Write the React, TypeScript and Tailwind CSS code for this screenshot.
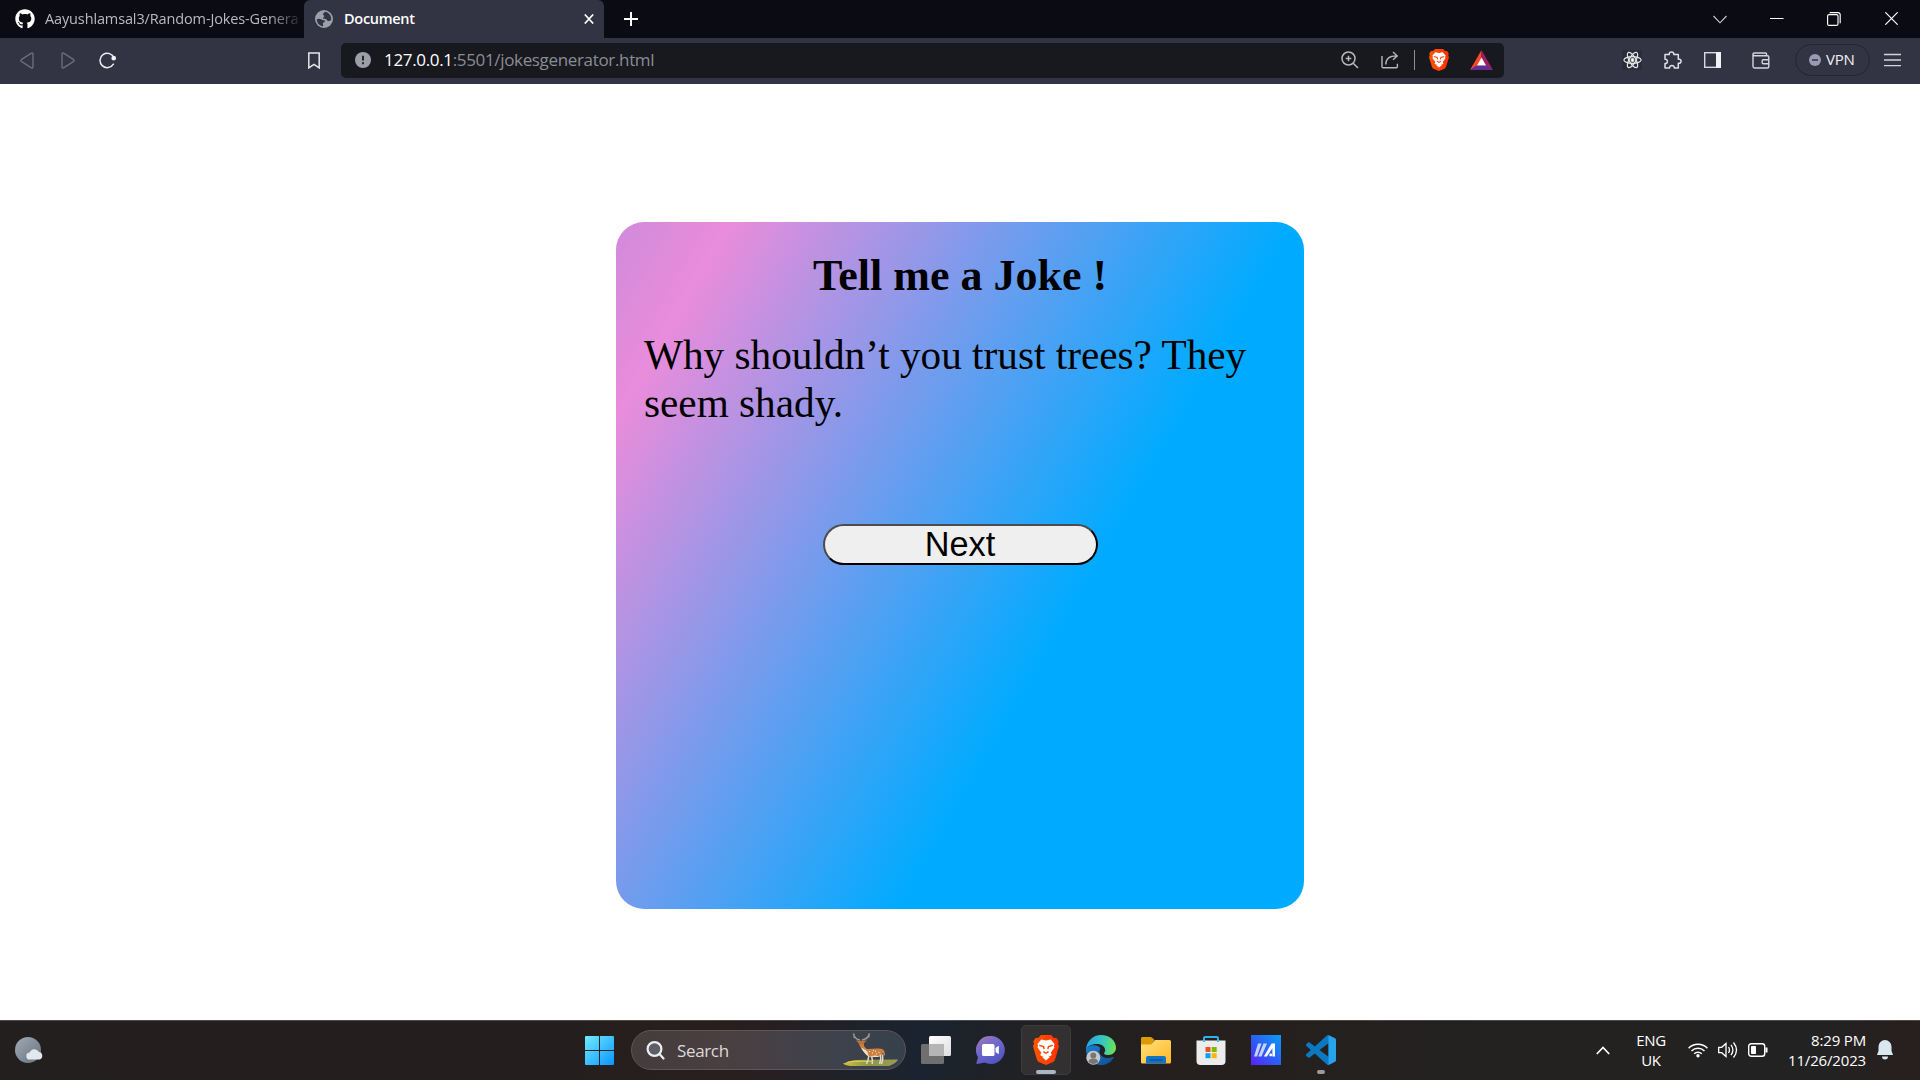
import React from "react";
import { FaGithub } from "react-icons/fa";

const ui = "font-['Open_Sans','Noto_Sans',sans-serif]";

function Globe() {
  return (
    <svg className="ml-[11px] shrink-0" width="18" height="18" viewBox="0 0 18 18">
      <circle cx="9" cy="9" r="9" fill="#9b9fa8" />
      <path d="M1.800 9.200c2-.9 3.400-.6 4.600.2 1.400 1 3.600.2 3.700 1.700.1 1.300-2 1-2.200 2.300-.1 1 .6 1.800.1 2.800C4.400 15.700 1.800 12.800 1.800 9.200zM9.800 1.800C9.600 3 8 2.900 8 4.200c0 1.200 1.500.9 1.400 2-.1.800-1.300.9-1.200 1.800.2 1.300 2 .5 3 1.300.9.7 1.400 2 2.700 1.800 1-.1 1.300-1 2.300-1.200C16.600 5.800 13.800 2.200 9.800 1.800z" fill="#323443" />
    </svg>
  );
}

function TabBar() {
  return (
    <div className="flex h-[38px] bg-[#0b0b14] text-white">
      <div className="flex w-[304px] items-center pl-[15px]">
        <FaGithub size={20} className="shrink-0" />
        <span className="ml-[10px] whitespace-nowrap text-[14.5px] leading-[20px] tracking-[-0.13px] text-[#b9babd] [mask-image:linear-gradient(to_right,black_88%,transparent_102%)]">
          Aayushlamsal3/Random-Jokes-Genera
        </span>
      </div>
      <div className="flex w-[300px] items-center rounded-t-[6px] bg-[#323443]">
        <Globe />
        <span className="ml-[11px] text-[14.5px] leading-[20px] font-semibold tracking-[-0.3px]">Document</span>
        <svg className="mr-[10px] ml-auto" width="10" height="10" viewBox="0 0 10 10" stroke="#fff" strokeWidth="1.700">
          <path d="M.8.5l8.400 9M9.200.5l-8.400 9" />
        </svg>
      </div>
      <svg className="mt-[12px] ml-[20px]" width="14" height="14" viewBox="0 0 14 14" stroke="#fff" strokeWidth="2">
        <path d="M7 0v14M0 7h14" />
      </svg>
      <div className="mr-[22px] ml-auto flex items-center pb-[1px]">
        <svg width="14" height="14" viewBox="0 0 14 14" fill="none" stroke="#cfcfd4" strokeWidth="1.100">
          <path d="M.5 4l6.500 6.800L13.500 4" />
        </svg>
        <svg className="ml-[43px]" width="14" height="14" viewBox="0 0 14 14" stroke="#fff">
          <path d="M0 6.500h13.500" />
        </svg>
        <svg className="ml-[43px]" width="14" height="14" viewBox="0 0 14 14" fill="none" stroke="#fff" strokeWidth="1.150">
          <rect x=".6" y="2.600" width="10.400" height="10.800" rx="1.500" />
          <path d="M2.600.6H11a2.200 2.200 0 0 1 2.200 2.200v8.500" />
        </svg>
        <svg className="ml-[44px]" width="13" height="13" viewBox="0 0 13 13" stroke="#fff" strokeWidth="1.200">
          <path d="M.3.3l12.400 12.400M12.700.3L.3 12.700" />
        </svg>
      </div>
    </div>
  );
}

function Toolbar() {
  return (
    <div className="flex h-[46px] items-center bg-[#323443] pr-[19px] pb-[2px]">
      <svg className="ml-[20px]" width="14" height="17" viewBox="0 0 14 17" fill="none" stroke="#6b6d78" strokeWidth="1.400" strokeLinejoin="round">
        <path d="M11.400 1.200Q13 .6 13 2.300v12.400q0 1.700-1.600 1.100L1.300 9.300q-1-.8 0-1.600z" />
      </svg>
      <svg className="ml-[27px]" width="14" height="17" viewBox="0 0 14 17" fill="none" stroke="#6b6d78" strokeWidth="1.400" strokeLinejoin="round">
        <path d="M2.600 1.200Q1 .6 1 2.300v12.400q0 1.700 1.600 1.100l10.100-6.500q1-.8 0-1.600z" />
      </svg>
      <svg className="ml-[24px]" width="18" height="18" viewBox="0 0 18 18" fill="none" stroke="#ededf0" strokeWidth="1.500" strokeLinecap="round">
        <path d="M15 7A7.200 7.200 0 1 0 14.400 13.200" />
        <circle cx="14.700" cy="7.200" r="1.600" fill="#fff" />
      </svg>
      <svg className="ml-[191px]" width="12" height="17" viewBox="0 0 12 17" fill="none" stroke="#e6e6ea" strokeWidth="1.500">
        <path d="M.8.9h10.400v15L6 12.300.8 15.900z" />
      </svg>
      <div className="ml-[21px] flex h-[35px] w-[1163px] items-center rounded-[5px] bg-[#17191f] pl-[14px]">
        <svg width="16" height="16" viewBox="0 0 16 16">
          <circle cx="8" cy="8" r="8" fill="#9c9fa9" />
          <path d="M8 3.800v4.800M8 10.300v2" stroke="#17191f" strokeWidth="1.800" />
        </svg>
        <span className="mb-[1px] ml-[13px] text-[17px] leading-[22px] tracking-[-0.34px] whitespace-nowrap text-[#8b8d93]">
          <span className="text-white">127.0.0.1</span>:5501/jokesgenerator.html
        </span>
        <div className="mr-[11px] ml-auto flex items-center">
          <svg width="18" height="18" viewBox="0 0 18 18" fill="none" stroke="#b7b8bc" strokeWidth="1.500">
            <circle cx="7.500" cy="7.500" r="6.500" />
            <path d="M12.200 12.200l4.800 4.800M7.500 4.700v5.600M4.700 7.500h5.600" />
          </svg>
          <svg className="ml-[22px]" width="18" height="18" viewBox="0 0 18 18" fill="none" stroke="#b7b8bc" strokeWidth="1.400">
            <path d="M1 5v10.500q0 1.200 1.200 1.200h13q1.200 0 1.200-1.200v-2.700M4.800 13.500c0-5 2.700-8.600 10.600-8.600M12 1l4.200 3.900L12 8.700" />
          </svg>
          <div className="ml-[15px] h-[20px] w-[1px] bg-[#8d8e93]" />
          <div className="ml-[14px]"><BraveLogo width={20} height={22} /></div>
          <svg className="ml-[21px]" width="23" height="20" viewBox="0 0 23 20">
            <path d="M11.500 0L0 20l11.500-6.500z" fill="#ff4724" />
            <path d="M11.500 0L23 20l-11.500-6.500z" fill="#9e1f63" />
            <path d="M0 20h23l-6-4.500H6z" fill="#662d91" />
            <path d="M11.500 7.500L16 15.500H7z" fill="#fff" />
          </svg>
        </div>
      </div>
      <div className="ml-auto flex items-center">
        <div className="flex h-[20px] w-[20px] items-center justify-center bg-[#2a2c38]">
          <svg width="19" height="18" viewBox="0 0 19 18" fill="none" stroke="#e6e6ea" strokeWidth="1.200">
            <ellipse cx="9.500" cy="9" rx="8.600" ry="3.300" />
            <ellipse cx="9.500" cy="9" rx="8.600" ry="3.300" transform="rotate(60 9.500 9)" />
            <ellipse cx="9.500" cy="9" rx="8.600" ry="3.300" transform="rotate(120 9.500 9)" />
            <circle cx="9.500" cy="9" r="1.300" fill="#fff" />
          </svg>
        </div>
        <svg className="ml-[22px]" width="18" height="18" viewBox="0 0 18 18" fill="none" stroke="#e0e0e5" strokeWidth="1.500" strokeLinejoin="round">
          <path d="M1 3.600h4.300C4.900 1.800 6.200.9 7.500.9s2.700 1 2.300 2.700h4.500v4.600c1.700-.4 2.800.7 2.800 2s-1.100 2.400-2.800 2v4.900h-4c.2-1.600-.8-2.600-2.300-2.600s-2.600 1-2.400 2.600H1v-4.500c1.500.1 2.400-.8 2.400-2.100S2.500 8.100 1 8.200z" />
        </svg>
        <svg className="ml-[22px]" width="17" height="16" viewBox="0 0 17 16">
          <rect x=".7" y=".7" width="15.600" height="14.600" fill="none" stroke="#d8d8dd" strokeWidth="1.400" />
          <path d="M12 0h5v16h-5z" fill="#f2f2f4" />
        </svg>
        <svg className="ml-[31px]" width="18" height="17" viewBox="0 0 18 17" fill="none" stroke="#d5d5da" strokeWidth="1.400">
          <path d="M14.500 3.800V2q0-1-1-1H2.300Q1 1 1 2.300v12q0 1.700 1.600 1.700h12.800q1.400 0 1.400-1.500V5.300q0-1.500-1.400-1.500H2.600Q1 3.800 1 2.300M16.800 7.700h-5.600q-1 0-1 1v2q0 1 1 1h5.600" />
        </svg>
        <div className="ml-[25px] flex h-[32px] w-[75px] items-center rounded-full border border-[#232531] pl-[13px]">
          <svg width="12" height="12" viewBox="0 0 12 12">
            <circle cx="6" cy="6" r="6" fill="#9a9bb2" />
            <path d="M3 6h6" stroke="#323443" strokeWidth="1.500" />
          </svg>
          <span className="mb-[2px] ml-[5px] text-[15px] leading-[20px] tracking-[-0.2px] text-[#f0f0f3]">VPN</span>
        </div>
        <svg className="ml-[14px]" width="17" height="14" viewBox="0 0 17 14" stroke="#d3d4da" strokeWidth="1.400">
          <path d="M0 1.500h17M0 7h17M0 12.600h17" />
        </svg>
      </div>
    </div>
  );
}

function BraveLogo({ width, height }: { width: number; height: number }) {
  return (
    <svg width={width} height={height} viewBox="0 0 20 24" preserveAspectRatio="none">
      <defs>
        <linearGradient id="lion" x1="0" x2="1">
          <stop offset="0" stopColor="#ff5500" />
          <stop offset="1" stopColor="#ff3000" />
        </linearGradient>
      </defs>
      <path d="M6 0h8l2 2.300 2-.2 1.800 3-.6 1.900.8 2-3 10.500c-.3 1-1 1.700-1.900 2.300L10 24l-5.100-2.200c-.9-.6-1.600-1.300-1.900-2.300L0 9l.8-2-.6-1.900 1.800-3 2 .2z" fill="url(#lion)" />
      <path d="M10 4.400l3.600-.8 3 3.600-.5 1.500.4 1.300-2.900 4.100.9 1.800-1.700 1.200-1.400-.8 1.400 1.400L10 20.300l-2.800-2.600 1.400-1.400-1.400.8-1.700-1.200.9-1.800L3.500 10l.4-1.300-.5-1.500 3-3.600z" fill="#fff" />
      <path d="M4.800 8.300l3.300.9.500 2M15.200 8.300l-3.300.9-.5 2M8 13.300l2 1.300 2-1.300" fill="none" stroke="#ff4500" strokeWidth="1.100" />
    </svg>
  );
}

function JokePage() {
  return (
    <main className="flex h-[936px] justify-center bg-white pt-[138px] text-black">
      <section className="flex h-[687px] w-[688px] flex-col items-center rounded-[28px] bg-[linear-gradient(120deg,#d08adb_0%,#e98cdb_10.6%,#00abff_62.6%)] px-[28px] pt-[28px] font-['Liberation_Serif','Times_New_Roman',serif]">
        <h1 className="mt-[1px] text-[44px] leading-[50px] font-bold">Tell me a Joke !</h1>
        <p className="mt-[30px] w-full text-[41.25px] leading-[48px]">Why shouldn’t you trust trees? They seem shady.</p>
        <button className="mt-[97px] h-[41px] w-[275px] rounded-[21px] border-2 border-t-[#4c4c4c] border-r-black border-b-black border-l-[#4c4c4c] bg-[#efefef] font-['Liberation_Sans',Arial,sans-serif] text-[34.300px] leading-[35px]">
          Next
        </button>
      </section>
    </main>
  );
}

function Deer() {
  return (
    <svg className="ml-auto" width="56" height="36" viewBox="0 0 56 36">
      <defs>
        <linearGradient id="grass" x1="0" x2="1">
          <stop offset="0" stopColor="#d5bf3e" />
          <stop offset=".45" stopColor="#8d9848" />
          <stop offset="1" stopColor="#9c9a50" />
        </linearGradient>
      </defs>
      <path d="M0 31.500c7-3 14-3.500 22-3.700l33-.3c-1 2.500-4 4.500-9 6.500H11C6 34 2 33.500 0 31.500z" fill="url(#grass)" />
      <path d="M4 30.500c9-2.500 17-.5 25-1.500" stroke="#e1ce4e" strokeWidth="1.200" fill="none" />
      <path d="M17 8c-3.500-.5-6-3-6.500-6.500M19 8c3.500-.5 6.500-3 7.500-6.500M13 6l-2.500-1.500M24 5.500l2.500-1.500" stroke="#9d9990" strokeWidth="1.600" fill="none" />
      <path d="M13 8.500l4 .2h2.500l4.500-.2-3 2.500v3l-2 2-2.300-1.800L15.500 11z" fill="#bb733b" />
      <path d="M16.800 13l3-1c1.500 1.800 2 4 4.200 5 4.500.2 9-1.200 14-.2 2.500.4 3.800 2 4 6.200l-1.200 1-.8-3.500-2.300 4c-4 .5-9 1-12 .3-4-2.300-5.500-7-8.900-11.800z" fill="#cc8143" />
      <path d="M17.500 15c2.500 4 4.500 7.500 8.500 9.500l-2-5.500zM26.500 24.600c4 .7 8 .4 10.500-.2l-5-.8z" fill="#eee0cc" />
      <path d="M25.800 24l-.8 4-1.500 4M28.500 24.500l1 3.500-.3 4M37.300 22.500l.5 4-1.200 5.500M39.500 22.500l.3 4.500-1.300 5" stroke="#e4d7c8" strokeWidth="1.500" fill="none" />
      <path d="M26 19.500h1M29 21h1M32 19.300h1M35.500 20.500h1M30 18.600h1M33 22h1" stroke="#f6e6cd" />
    </svg>
  );
}

function Slot({ children, running, active }: { children: React.ReactNode; running?: boolean; active?: boolean }) {
  return (
    <div className={active ? "relative flex h-[50px] w-[50px] items-center justify-center rounded-[5px] border border-[#3d3b3b] bg-[#323030]" : "relative flex h-[50px] w-[50px] items-center justify-center"}>
      {children}
      {active && <span className="absolute bottom-0 h-[4px] w-[20px] rounded-full bg-[#a9b7c4]" />}
      {running && <span className="absolute bottom-[1px] h-[4px] w-[8px] rounded-full bg-[#9b9a9a]" />}
    </div>
  );
}

function Taskbar() {
  return (
    <footer className="flex h-[60px] items-center border-t border-[#4a4a4a] bg-[linear-gradient(90deg,#231f1e_0%,#241f1e_30%,#2a1e1e_38%,#1e222b_45%,#1a2430_48%,#1f2125_52%,#251f1d_62%,#232221_78%,#232222_95%,#281f1e_100%)] pb-[1px]">
      <svg className="ml-[15px]" width="28" height="27" viewBox="0 0 28 27">
        <defs>
          <linearGradient id="moon" x1="0" y1="0" x2="1" y2="1">
            <stop offset="0" stopColor="#a0aab5" />
            <stop offset="1" stopColor="#66727f" />
          </linearGradient>
        </defs>
        <circle cx="13" cy="13" r="13" fill="url(#moon)" />
        <path d="M15 22.500a3.500 3.500 0 0 1-.3-7 5 5 0 0 1 9.200-.4 3.800 3.800 0 0 1 .7 7.400z" fill="#e3e8ee" />
      </svg>
      <svg className="ml-[542px]" width="29" height="29" viewBox="0 0 29 29">
        <defs>
          <linearGradient id="win" gradientUnits="userSpaceOnUse" x1="0" y1="0" x2="29" y2="29">
            <stop offset="0" stopColor="#70eaff" />
            <stop offset="1" stopColor="#0a95ff" />
          </linearGradient>
        </defs>
        <path d="M1 0h13v14H0V1q0-1 1-1zM15 0h13q1 0 1 1v13H15zM0 15h14v14H1q-1 0-1-1zM15 15h14v13q0 1-1 1H15z" fill="url(#win)" />
      </svg>
      <div className="ml-[17px] flex h-[40px] w-[275px] items-center rounded-full border border-[#5d5557] bg-[linear-gradient(90deg,#443c3d,#4a3f41_35%,#3e424c_75%,#36414c)] pr-[6px] pl-[14px]">
        <svg width="19" height="19" viewBox="0 0 19 19" fill="none" stroke="#eceef1" strokeWidth="2.200" strokeLinecap="round">
          <circle cx="8.500" cy="8" r="6.900" fill="#5d5e66" />
          <path d="M13.500 13l4 4.500" />
        </svg>
        <span className="mt-[2px] ml-[12px] text-[17px] leading-[22px] tracking-[-0.35px] text-[#dcd9da]">Search</span>
        <Deer />
      </div>
      <div className="ml-[5px] flex gap-[5px]">
        <Slot>
          <svg width="30" height="28" viewBox="0 0 30 28">
            <defs>
              <linearGradient id="pane" x1="0" y1="0" x2="1" y2="1">
                <stop offset="0" stopColor="#fff" />
                <stop offset="1" stopColor="#dedede" />
              </linearGradient>
            </defs>
            <rect x="8" width="22" height="20" rx="1.500" fill="url(#pane)" />
            <rect y="8" width="23" height="20" rx="1.500" fill="#6f6f6f" />
            <path d="M8 8h15v12H8z" fill="#b5b5b5" />
          </svg>
        </Slot>
        <Slot>
          <svg className="mr-[1px]" width="29" height="29" viewBox="0 0 29 29">
            <defs>
              <linearGradient id="chat" x1="0" y1="0" x2=".6" y2="1">
                <stop offset="0" stopColor="#a97ab2" />
                <stop offset=".5" stopColor="#6f67cc" />
                <stop offset="1" stopColor="#5256c0" />
              </linearGradient>
            </defs>
            <path d="M14.500 0a14 14 0 1 1-6 26.500L1.500 28q-1.500 0-1-1.400L2 21.200A14 14 0 0 1 14.500 0z" fill="url(#chat)" />
            <rect x="6" y="8" width="12.500" height="12" rx="1.500" fill="#fff" />
            <path d="M19.500 12l3.300-2.300v8.600L19.500 16z" fill="#fff" />
          </svg>
        </Slot>
        <Slot active>
          <BraveLogo width={26} height={30} />
        </Slot>
        <Slot>
          <svg width="30" height="30" viewBox="0 0 30 30">
            <defs>
              <linearGradient id="edgeTop" x1="0" y1=".5" x2="1" y2=".6">
                <stop offset="0" stopColor="#2aa5e0" />
                <stop offset=".55" stopColor="#35c8c0" />
                <stop offset="1" stopColor="#6ee34b" />
              </linearGradient>
              <linearGradient id="edgeLow" x1="0" y1="0" x2="1" y2="1">
                <stop offset="0" stopColor="#1782d0" />
                <stop offset="1" stopColor="#0f4d94" />
              </linearGradient>
            </defs>
            <path d="M0 14v2a15 15 0 0 0 27.700 7c.5-.9-.3-1.300-1-1-6 3-13.200-.4-13.200-5.500 0-1.300.5-2.300 1-3C14 10 4 8 0 14z" fill="url(#edgeLow)" />
            <path d="M0 15A15 15 0 0 1 15 0c9 0 15 6 15 12.800 0 4.600-3.800 7.200-7.400 7.200-3 0-4.600-.8-4.600-1.600 0-.7 1.200-1 1.200-3.100C19.200 11.700 15.700 9 11 9 5 9 1 11.500 0 15z" fill="url(#edgeTop)" />
            <circle cx="7.300" cy="22.700" r="7" fill="#c9c8c7" />
            <circle cx="7.300" cy="20.500" r="2.900" fill="#777" />
            <path d="M2.500 27q0-3.500 4.800-3.500t4.800 3.500a6.500 6.500 0 0 1-9.600 0z" fill="#777" />
          </svg>
        </Slot>
        <Slot>
          <svg width="30" height="28" viewBox="0 0 30 28">
            <defs>
              <linearGradient id="folder" x1="0" y1="0" x2="1" y2="1">
                <stop offset="0" stopColor="#ffe07a" />
                <stop offset="1" stopColor="#fdb827" />
              </linearGradient>
            </defs>
            <path d="M0 2.500Q0 1 1.500 1h8q1 0 1.700.7L13.500 4 10 9H0z" fill="#dc9a06" />
            <path d="M0 8.500h10L14 4h14.500Q30 4 30 5.500v20.800q0 1.200-1.200 1.200H1.200Q0 27.500 0 26.300z" fill="url(#folder)" />
            <path d="M5 27.500V22q0-2 2-2h16q2 0 2 2v5.500z" fill="#1373c4" />
            <path d="M8.500 24h13" stroke="#084f92" strokeWidth="1.200" />
          </svg>
        </Slot>
        <Slot>
          <svg width="30" height="30" viewBox="0 0 30 30">
            <path d="M8 7V3.200Q8 2 9.200 2h11.600Q22 2 22 3.200V7" fill="none" stroke="#2cb4ea" strokeWidth="2" />
            <path d="M.5 5.500h29V26q0 4-4 4h-21q-4 0-4-4z" fill="#ececec" />
            <path d="M8 5.500V7M22 5.500V7" stroke="#2cb4ea" strokeWidth="2" />
            <path d="M9.500 12h5v5h-5z" fill="#f04f23" />
            <path d="M15.700 12h5v5h-5z" fill="#7fb900" />
            <path d="M9.500 18.200h5v5h-5z" fill="#06a3ed" />
            <path d="M15.700 18.200h5v5h-5z" fill="#fdb702" />
          </svg>
        </Slot>
        <Slot>
          <svg width="30" height="30" viewBox="0 0 30 30">
            <defs>
              <linearGradient id="asus" x1="1" y1="0" x2="0" y2="1">
                <stop offset="0" stopColor="#0b9df5" />
                <stop offset=".5" stopColor="#2a60f5" />
                <stop offset="1" stopColor="#5c20f8" />
              </linearGradient>
            </defs>
            <path d="M0 0h30v30H0z" fill="url(#asus)" />
            <path d="M7 8.500h3.500L6 21.500H3zM12.500 8.500H16L10.500 21.500H7.200z" fill="#c3d2fc" />
            <path d="M20.500 8.500H24v13h-2.600v-8.300L16 21.500h-3.200z" fill="#fff" />
            <circle cx="19.700" cy="20" r="1.400" fill="#fff" />
          </svg>
        </Slot>
        <Slot running>
          <svg width="30" height="30" viewBox="0 0 24 24">
            <path d="M23.150 2.587L18.210.21a1.494 1.494 0 0 0-1.705.29l-9.460 8.630-4.120-3.128a.999.999 0 0 0-1.276.057L.327 7.261A1 1 0 0 0 .326 8.740L3.899 12 .326 15.260a1 1 0 0 0 .001 1.479L1.650 17.940a.999.999 0 0 0 1.276.057l4.120-3.128 9.460 8.630a1.492 1.492 0 0 0 1.704.29l4.942-2.377A1.500 1.500 0 0 0 24 20.060V3.939a1.500 1.500 0 0 0-.85-1.352zm-5.146 14.861L10.826 12l7.178-5.448v10.896z" fill="#0b78c1" />
            <path d="M18 .1v23.800l5.150-2.500A1.500 1.500 0 0 0 24 20.060V3.939a1.500 1.500 0 0 0-.85-1.352z" fill="#27a3ee" />
          </svg>
        </Slot>
      </div>
      <div className="mr-[27px] ml-auto flex items-center leading-[20px] text-white">
        <svg width="14" height="9" viewBox="0 0 14 9" fill="none" stroke="#fff" strokeWidth="1.700">
          <path d="M.8 8L7 1.500 13.200 8" />
        </svg>
        <div className="ml-[24px] w-[34px] text-center text-[15px] tracking-[-0.3px]">
          <div>ENG</div>
          <div>UK</div>
        </div>
        <svg className="ml-[20px]" width="20" height="16" viewBox="0 0 20 16" fill="none" stroke="#fff" strokeWidth="1.500">
          <path d="M.6 6.200a13.300 13.300 0 0 1 18.800 0M3.500 9a9.200 9.200 0 0 1 13 0M6.200 11.700a5.400 5.400 0 0 1 7.600 0" />
          <circle cx="10" cy="13.700" r="1.700" fill="#fff" stroke="none" />
        </svg>
        <svg className="ml-[10px]" width="20" height="18" viewBox="0 0 20 18" fill="none" stroke="#fff" strokeWidth="1.300">
          <path d="M.7 6.300h3L8 2.500v13l-4.300-3.800h-3zM10.500 6q2 3 0 6M13 3.800q3.800 5.200 0 10.400M15.500 1.500q6 7.500 0 15" />
        </svg>
        <svg className="ml-[10px]" width="20" height="14" viewBox="0 0 20 14" fill="none" stroke="#fff" strokeWidth="1.400">
          <rect x=".7" y=".7" width="16" height="12.600" rx="2.500" />
          <rect x="3" y="3" width="5" height="8" rx=".8" fill="#fff" stroke="none" />
          <path d="M18.500 4.500v5" strokeWidth="2" />
        </svg>
        <div className="ml-[16px] w-[82px] text-right text-[15px] tracking-[-0.16px] whitespace-nowrap">
          <div>8:29 PM</div>
          <div>11/26/2023</div>
        </div>
        <svg className="ml-[11px]" width="16" height="20" viewBox="0 0 16 20" fill="#d9e7ee">
          <path d="M8 0a6.500 6.500 0 0 1 6.500 6.500v4.300L16 15H0l1.500-4.200V6.500A6.500 6.500 0 0 1 8 0zM5 16.500h6a3 3 0 0 1-6 0z" />
        </svg>
      </div>
    </footer>
  );
}

export default function App() {
  return (
    <div className={`flex h-[1080px] w-[1920px] flex-col overflow-hidden ${ui}`}>
      <TabBar />
      <Toolbar />
      <JokePage />
      <Taskbar />
    </div>
  );
}
